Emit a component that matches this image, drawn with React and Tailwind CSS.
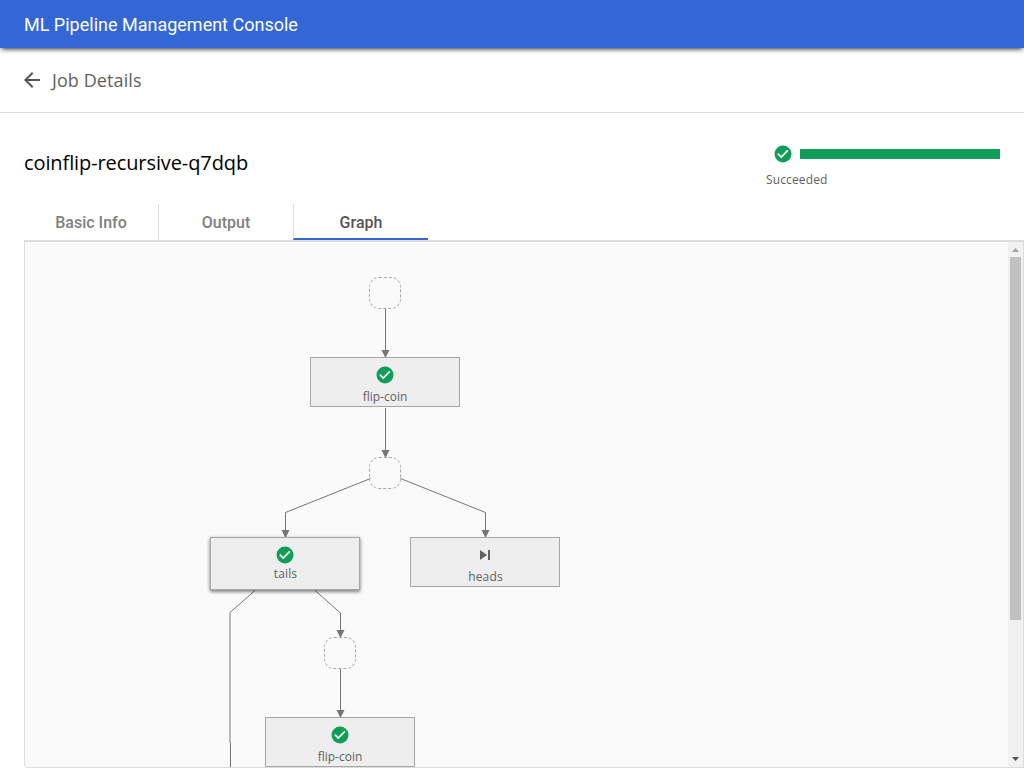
import React from "react";

const PANEL_X = 25;
const PANEL_Y = 242;

function CheckIcon() {
  return (
    <svg width="18" height="18" viewBox="0 0 18 18" className="block shrink-0">
      <circle cx="9" cy="9" r="8.5" fill="#0f9d58" />
      <path d="M3.8 8.7 7.2 12.1 13.8 5.3" fill="none" stroke="#fff" strokeWidth="1.7" />
    </svg>
  );
}

function SkipIcon() {
  return (
    <svg width="18" height="18" viewBox="0 0 18 18" className="block shrink-0">
      <path d="M4 4v10l7-5z" fill="#616161" />
      <path d="M12 4h2v10h-2z" fill="#616161" />
    </svg>
  );
}

const placeholders = [
  { x: 369, y: 277 },
  { x: 369, y: 457 },
  { x: 324, y: 637 },
];

const steps = [
  { x: 310, y: 357, label: "flip-coin", icon: "check" },
  { x: 210, y: 537, label: "tails", icon: "check", raised: true },
  { x: 410, y: 537, label: "heads", icon: "skip" },
  { x: 265, y: 717, label: "flip-coin", icon: "check" },
];

const edges = [
  "M385.5 309V352",
  "M385.5 408V452",
  "M370.5 478.5 285.5 512.5V532",
  "M400.5 478.5 485.5 512.5V532",
  "M255 590.5 230 612.5",
  "M315 590.5 340.5 613V632",
  "M230.5 743V767",
  "M340.5 668V712",
];

const arrows = [
  [385.5, 357],
  [385.5, 457],
  [285.5, 537],
  [485.5, 537],
  [340.5, 637],
  [340.5, 717],
];

function Step({ step }) {
  return (
    <div
      className={
        "absolute flex w-[150px] flex-col items-center border border-[#a6a6a6] bg-[#eeeeee] pt-[8px] text-[12px] leading-[16px] text-[#5f5f5f] " +
        (step.raised ? "h-[53px] shadow-[0_1px_4px_rgba(0,0,0,0.3),0_2px_3px_rgba(0,0,0,0.3)]" : "h-[50px]")
      }
      style={{ left: step.x - PANEL_X, top: step.y - PANEL_Y }}
    >
      {step.icon === "check" ? <CheckIcon /> : <SkipIcon />}
      <span
        className={
          (step.raised ? "mt-[2px]" : "mt-[5px]") +
          (step.label === "flip-coin" ? " tracking-[0.01px]" : " pl-px tracking-[0.15px]")
        }
      >
        {step.label}
      </span>
    </div>
  );
}

function Graph() {
  return (
    <div className="relative min-w-0 flex-1 overflow-hidden bg-[#fafafa]">
      {placeholders.map((p) => (
        <div
          key={p.x + "-" + p.y}
          className="absolute size-8 rounded-[10px] border border-dashed border-[#a6a6a6]"
          style={{ left: p.x - PANEL_X, top: p.y - PANEL_Y }}
        />
      ))}
      <svg width="983" height="525" viewBox="25 242 983 525" className="block" fill="none" stroke="#757575">
        {edges.map((d) => (
          <path key={d} d={d} />
        ))}
        <path d="M230 612.5V743" stroke="#bababa" strokeWidth="2" />
        {arrows.map(([x, y]) => (
          <path key={x + "-" + y} d={`M${x - 4} ${y - 7}h8l-4 8z`} fill="#757575" stroke="none" />
        ))}
      </svg>
      {steps.map((s) => (
        <Step key={s.x + "-" + s.y} step={s} />
      ))}
    </div>
  );
}

function Scrollbar() {
  return (
    <div className="flex w-[15px] shrink-0 flex-col items-center justify-between bg-[#f1f1f1]">
      <div className="flex w-full flex-col items-center">
        <svg width="15" height="15" viewBox="0 0 15 15" className="block">
          <path d="M4 10 7.5 6 11 10z" fill="#a3a3a3" />
        </svg>
        <div className="h-[363px] w-[11px] bg-[#c1c1c1]" />
      </div>
      <svg width="15" height="15" viewBox="0 0 15 15" className="block">
        <path d="M4 5h7L7.5 9z" fill="#505050" />
      </svg>
    </div>
  );
}

export default function App() {
  return (
    <div className="flex h-[768px] w-[1024px] flex-col overflow-hidden bg-white font-['Open_Sans',sans-serif]">
      <header className="relative flex h-12 shrink-0 items-center bg-[#3367d6] px-6 font-['Roboto',sans-serif] text-[18px] text-white shadow-[0_3px_4px_-2px_rgba(0,0,0,0.7),0_2px_6px_rgba(0,0,0,0.2)]">
        <span className="pt-px">ML Pipeline Management Console</span>
      </header>

      <div className="flex h-[65px] shrink-0 items-center border-b border-[#dddddd] pl-6 text-[18px] text-[#5f5f5f]">
        <svg width="16" height="16" viewBox="0 0 16 16" className="block" fill="#555555">
          <path d="M16 7H3.83l5.59-5.59L8 0 0 8l8 8 1.41-1.41L3.83 9H16z" />
        </svg>
        <span className="ml-3 tracking-[0.09px]">Job Details</span>
      </div>

      <div className="flex h-[91px] shrink-0 items-start justify-between px-6">
        <h1 className="pt-[35px] text-[20px] leading-[30px] tracking-[-0.1px] text-black">coinflip-recursive-q7dqb</h1>
        <div className="flex w-[234px] flex-col pt-[32px]">
          <div className="flex items-center pl-[8px]">
            <CheckIcon />
            <div className="ml-[8px] h-[10px] w-[200px] bg-[#0f9d58]" />
          </div>
          <span className="mt-[9px] text-[12px] leading-[16px] tracking-[0.13px] text-[#5f5f5f]">Succeeded</span>
        </div>
      </div>

      <nav className="flex h-9 shrink-0 pl-6 text-center font-['Roboto',sans-serif] text-[16px] leading-[37px] font-medium text-[#808080]">
        <div className="w-[135px] border-r border-[#dddddd]">Basic Info</div>
        <div className="w-[134px]">Output</div>
        <div className="w-[135px] border-b-2 border-l border-[#3367d6] border-l-[#dddddd] text-[#555555]">Graph</div>
      </nav>

      <main className="ml-6 flex min-h-0 flex-1 overflow-hidden rounded-bl-[4px] border border-t-2 border-[#dddddd]">
        <Graph />
        <Scrollbar />
      </main>
    </div>
  );
}
